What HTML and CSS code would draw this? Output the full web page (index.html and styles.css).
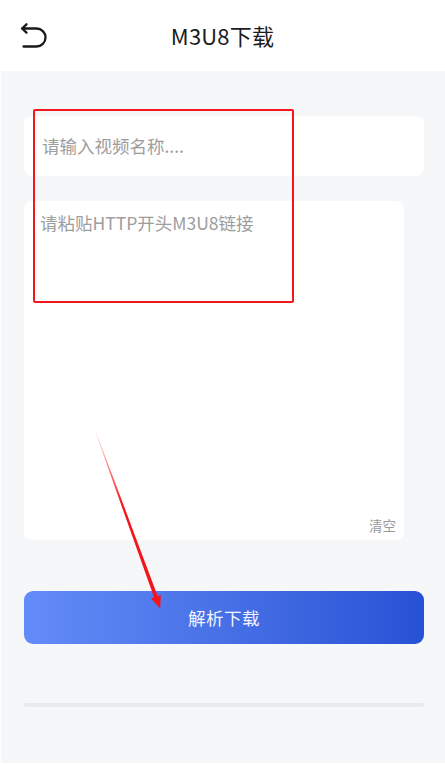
FILE: index.html
```html
<!DOCTYPE html>
<html lang="zh">
<head>
<meta charset="utf-8">
<title>M3U8下载</title>
<link rel="stylesheet" href="styles.css">
</head>
<body>
<div class="page">
  <header class="topbar">
    <div class="back">
      <svg width="32" height="32" viewBox="18 20 32 32" aria-hidden="true">
        <path d="M26.5 24.3 L22 28.5 L26.5 32.7 M22 28.5 H36.5 A9 9 0 0 1 36.5 46.5 H23.5" fill="none" stroke="#1a1a1a" stroke-width="2.3" stroke-linecap="round" stroke-linejoin="round"/>
      </svg>
    </div>
    <h1 class="title">M3U8下载</h1>
    <div class="spacer"></div>
  </header>
  <main class="content">
    <div class="card name-card">
      <span class="placeholder">请输入视频名称....</span>
    </div>
    <div class="card link-card">
      <span class="placeholder">请粘贴HTTP开头M3U8链接</span>
      <span class="clear">清空</span>
    </div>
    <button class="submit">解析下载</button>
    <div class="divider"></div>
  </main>
  <div class="highlight"></div>
  <svg class="arrow" width="445" height="765" viewBox="0 0 445 765" aria-hidden="true">
    <defs>
      <linearGradient id="fade" gradientUnits="userSpaceOnUse" x1="95" y1="430" x2="122" y2="505">
        <stop offset="0" stop-color="#ff2020" stop-opacity="0.05"/>
        <stop offset="1" stop-color="#f5141a" stop-opacity="1"/>
      </linearGradient>
    </defs>
    <polygon points="95.4,429.9 94.6,430.1 154.2,597.8 157.8,596.4" fill="url(#fade)"/>
    <polygon points="151.0,598.4 160.8,594.9 160.2,608.5" fill="#f5141a"/>
  </svg>
</div>
</body>
</html>
```
FILE: styles.css
```css
* { box-sizing: border-box; }
html, body {
  margin: 0;
  padding: 0;
  background: #ffffff;
}
body {
  font-family: "Noto Sans CJK SC", "Noto Sans", sans-serif;
}
.page {
  position: relative;
  width: 445px;
  height: 765px;
  overflow: hidden;
  display: flex;
  flex-direction: column;
}
.topbar {
  height: 71px;
  flex: none;
  display: grid;
  grid-template-columns: 1fr auto 1fr;
  align-items: center;
  background: #ffffff;
}
.back {
  display: flex;
  align-items: center;
  height: 32px;
  padding-left: 18px;
}
.title {
  margin: 0;
  font-size: 22px;
  font-weight: 400;
  color: #1c1c1c;
  letter-spacing: 0.2px;
  line-height: 30px;
  margin-bottom: 1px;
}
.content {
  flex: 1;
  background: #f6f7f9;
  margin: 0 0 2px 1px;
  padding: 45px 21px 0 23px;
  display: flex;
  flex-direction: column;
}
.card {
  background: #ffffff;
  border-radius: 8px;
}
.name-card {
  height: 60px;
  display: flex;
  align-items: center;
  padding: 0 18px;
}
.placeholder {
  font-size: 17.5px;
  color: #9d9d9d;
  line-height: 24px;
}
.link-card {
  width: 380px;
  height: 339px;
  margin-top: 25px;
  padding: 10px 8px 6px 16px;
  display: flex;
  flex-direction: column;
  justify-content: space-between;
}
.clear {
  align-self: flex-end;
  font-size: 13.5px;
  color: #9a9a9a;
  line-height: 18px;
}
.submit {
  margin-top: 51px;
  height: 53px;
  width: 400px;
  border: none;
  border-radius: 9px;
  background: linear-gradient(90deg, #638cf8 0%, #4a73e8 45%, #2852d5 100%);
  color: #f2f5ff;
  font-family: "Noto Sans CJK SC", "Noto Sans", sans-serif;
  font-size: 17.5px;
  letter-spacing: 0.5px;
  padding: 0;
}
.divider {
  margin-top: 59px;
  width: 400px;
  height: 4px;
  border-radius: 2px;
  background: #e9eaee;
}
.highlight {
  position: absolute;
  left: 33px;
  top: 109px;
  width: 261px;
  height: 194px;
  border: 2px solid #f2171b;
  border-radius: 2px;
}
.arrow {
  position: absolute;
  left: 0;
  top: 0;
  pointer-events: none;
}
```
